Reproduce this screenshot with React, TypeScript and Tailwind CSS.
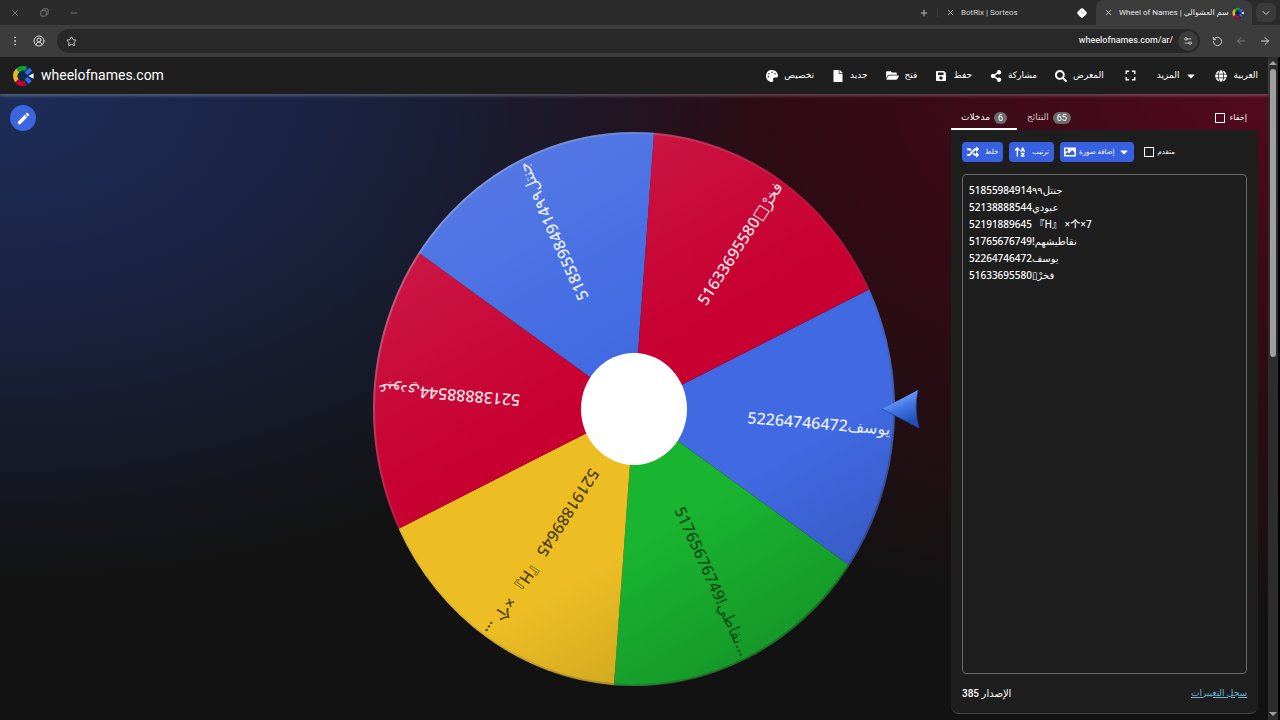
import React, { useState } from "react";
import {
  FaPalette,
  FaFile,
  FaFolderOpen,
  FaShareAlt,
  FaSearch,
  FaCaretDown,
  FaGlobe,
  FaRandom,
  FaImage,
} from "react-icons/fa";
import { FaArrowUpAZ } from "react-icons/fa6";
import { MdFullscreen, MdEdit } from "react-icons/md";
import {
  X,
  Minus,
  Plus,
  ChevronDown,
  EllipsisVertical,
  CircleUserRound,
  Star,
  Settings2,
  RotateCcw,
  ArrowLeft,
  ArrowRight,
} from "lucide-react";

interface Slice {
  label: string;
  fill: string;
  text: string;
}

const RX = 261;
const RY = 277;
const START = -25.6;

const slices: Slice[] = [
  { label: "52264746472يوسف", fill: "#4069e2", text: "#e8eefc" },
  { label: "51765676749!نقاطي…", fill: "#19b430", text: "#0a4a14" },
  { label: "52191889645 『H』 ×个 …", fill: "#ecbe24", text: "#4d3d08" },
  { label: "52138888544عبودي", fill: "#c70031", text: "#fbe3e8" },
  { label: "51855984914جنتل٩٩", fill: "#4069e2", text: "#e8eefc" },
  { label: "51633695580□فخرْ", fill: "#c70031", text: "#fbe3e8" },
];

const entries = [
  "51855984914جنتل٩٩",
  "52138888544عبودي",
  "52191889645 『H』 ×个×7",
  "51765676749!نقاطيشهم",
  "52264746472يوسف",
  "51633695580▯فخرْ",
].join("\n");

const point = (deg: number, scale = 1) => {
  const rad = (deg * Math.PI) / 180;
  return { x: Math.cos(rad) * RX * scale, y: Math.sin(rad) * RY * scale };
};

const Logo = ({ className }: { className: string }) => (
  <svg viewBox="0 0 24 24" className={className} aria-hidden="true">
    <circle cx="12" cy="12" r="11.5" fill="#0d2c4d" />
    <g fill="none" strokeWidth="5">
      <path d="M6.2 6A8.4 8.4 0 0 1 15.4 4.3" stroke="#14a02c" />
      <path d="M5.4 17.2A8.4 8.4 0 0 1 6.2 6" stroke="#eab71d" />
      <path d="M14.8 19.9A8.4 8.4 0 0 1 5.4 17.2" stroke="#c70031" />
      <path d="M15.4 9.5L20.5 4.5" stroke="#3369e8" strokeWidth="4.4" />
      <path d="M15.4 14.5L20 19" stroke="#3369e8" strokeWidth="4.4" />
    </g>
    <path d="M18 12l5.5-3v6z" fill="#fff" />
  </svg>
);

const RestoreIcon = () => (
  <svg viewBox="0 0 10 10" className="size-[9px]" fill="none" stroke="currentColor" aria-hidden="true">
    <rect x="1" y="3" width="6" height="6" rx="1" />
    <path d="M3 3V2a1 1 0 0 1 1-1h4a1 1 0 0 1 1 1v4a1 1 0 0 1-1 1H7" />
  </svg>
);

const SaveIcon = () => (
  <svg viewBox="0 0 24 24" className="size-3" aria-hidden="true">
    <path
      fill="currentColor"
      fillRule="evenodd"
      d="M4 2h14l4 4v14a2 2 0 0 1-2 2H4a2 2 0 0 1-2-2V4a2 2 0 0 1 2-2zM6 5v5h11V5zM12 12.500a3.500 3.500 0 1 0 0 7a3.500 3.500 0 1 0 0-7z"
    />
  </svg>
);

const Wheel = () => (
  <svg viewBox="-317 -315 634 626" className="h-full w-full" role="img" aria-label="wheelofnames.com">
    <defs>
      <linearGradient id="shine" x1="0.2" y1="0" x2="0.75" y2="1">
        <stop offset="0" stopColor="#fff" stopOpacity="0.12" />
        <stop offset="0.45" stopColor="#fff" stopOpacity="0" />
        <stop offset="0.7" stopColor="#000" stopOpacity="0" />
        <stop offset="1" stopColor="#000" stopOpacity="0.18" />
      </linearGradient>
      <linearGradient id="rim" x1="0" y1="0" x2="1" y2="1">
        <stop offset="0.1" stopColor="#b9c0dc" stopOpacity="0.5" />
        <stop offset="0.45" stopColor="#888" stopOpacity="0.1" />
        <stop offset="1" stopColor="#000" stopOpacity="0.5" />
      </linearGradient>
      <linearGradient id="arrow" x1="0" y1="0" x2="0.4" y2="1">
        <stop offset="0.2" stopColor="#7eabfb" />
        <stop offset="0.6" stopColor="#3f74e4" />
        <stop offset="1" stopColor="#2350b8" />
      </linearGradient>
    </defs>
    {slices.map((s, i) => {
      const a = point(START + i * 60);
      const b = point(START + (i + 1) * 60);
      return <path key={s.label} d={`M0 0L${a.x} ${a.y}A${RX} ${RY} 0 0 1 ${b.x} ${b.y}Z`} fill={s.fill} />;
    })}
    <ellipse rx={RX} ry={RY} fill="url(#shine)" />
    <ellipse rx={RX - 1} ry={RY - 1} fill="none" stroke="url(#rim)" strokeWidth="2" />
    {slices.map((s, i) => {
      const end = point(START + 30 + i * 60, 0.985);
      const angle = (Math.atan2(end.y, end.x) * 180) / Math.PI;
      return (
        <text
          key={s.label}
          transform={`rotate(${angle})`}
          x={Math.hypot(end.x, end.y)}
          y="5"
          textAnchor="end"
          fill={s.text}
          className="font-['Noto_Sans','DejaVu_Sans','Noto_Sans_CJK_SC',sans-serif] text-[16px] font-medium"
        >
          {s.label}
        </text>
      );
    })}
    <ellipse rx="53" ry="56" fill="#fff" />
    <path d="M248 0L284 -19Q280 0 285 19Z" fill="url(#arrow)" />
    <path d="M284 -19Q280 0 285 19L248 0" fill="none" stroke="#1c3f94" strokeOpacity="0.7" />
  </svg>
);

const navItems = [
  { icon: <FaPalette size={12} />, label: "تخصيص" },
  { icon: <FaFile size={12} />, label: "جديد" },
  { icon: <FaFolderOpen size={13} />, label: "فتح" },
  { icon: <SaveIcon />, label: "حفظ" },
  { icon: <FaShareAlt size={12} />, label: "مشاركة" },
  { icon: <FaSearch size={12} />, label: "المعرض" },
];

const BrowserBar = () => (
  <div className="bg-[#2b2b2b] font-['Roboto','DejaVu_Sans',sans-serif] text-[#d5d5d5]">
    <div className="flex h-[25px] items-stretch justify-between pr-1">
      <div className="flex items-center gap-5 pl-[10px] text-[#858585]">
        <button aria-label="Close"><X size={10} /></button>
        <button aria-label="Restore"><RestoreIcon /></button>
        <button aria-label="Minimize"><Minus size={10} /></button>
      </div>
      <div className="flex items-stretch text-[8px]">
        <button aria-label="New tab" className="px-2"><Plus size={10} /></button>
        <div className="my-2 w-px bg-[#3c3c3c]" />
        <div className="flex w-[158px] items-center px-2">
          <X size={9} />
          <span className="ml-[6px] flex-1 truncate">BotRix | Sorteos</span>
          <svg viewBox="0 0 12 12" className="size-3 text-white" aria-hidden="true">
            <path d="M4.500 2L6 1l1.500 1L10 4.500 11 6l-1 1.500L7.500 10 6 11l-1.500-1L2 7.500 1 6l1-1.500z" fill="currentColor" />
            <path d="M5 5h.8M7 6h.8" stroke="#555" strokeWidth="0.8" />
          </svg>
        </div>
        <div className="flex w-[156px] items-center rounded-t-lg bg-[#3c3c3c] px-2 text-[#e8e8e8]">
          <X size={9} />
          <span className="ml-[6px] flex-1 whitespace-nowrap">Wheel of Names | سم العشوالي</span>
          <Logo className="size-3" />
        </div>
        <button aria-label="Search tabs" className="my-[3px] ml-1 rounded-md bg-[#3a3a3a] px-1"><ChevronDown size={12} /></button>
      </div>
    </div>
    <div className="flex h-8 items-center gap-3 bg-[#3c3c3c] px-[9px]">
      <button aria-label="Menu"><EllipsisVertical size={12} /></button>
      <button aria-label="Profile"><CircleUserRound size={12} /></button>
      <div className="flex h-6 flex-1 items-center rounded-full bg-[#282828] pl-[9px] pr-[2px]">
        <button aria-label="Bookmark"><Star size={11} /></button>
        <input
          aria-label="Address"
          defaultValue="wheelofnames.com/ar/"
          className="min-w-0 flex-1 bg-transparent px-[5px] text-right text-[9px] font-medium text-[#e3e3e3] outline-none"
        />
        <button aria-label="Site settings" className="flex size-5 items-center justify-center rounded-full bg-[#3c3c3c]"><Settings2 size={10} /></button>
      </div>
      <button aria-label="Reload"><RotateCcw size={11} /></button>
      <button aria-label="Forward" className="text-[#7d7d7d]"><ArrowLeft size={12} /></button>
      <button aria-label="Back"><ArrowRight size={12} /></button>
    </div>
  </div>
);

const Header = () => (
  <header className="relative flex h-[37px] items-center justify-between bg-[#1e1e1e] pl-3 pr-[10px] text-white shadow-[0_2px_3px_rgba(255,255,255,0.25)]">
    <a href="#" className="flex items-center gap-[7px] font-['Roboto',sans-serif] text-[14px]">
      <Logo className="size-[22px]" />
      wheelofnames.com
    </a>
    <nav className="flex items-center gap-[18px] text-[9px] font-medium">
      {navItems.map(({ icon, label }) => (
        <button key={label} className="flex items-center gap-[6px]">
          {icon}
          {label}
        </button>
      ))}
      <button aria-label="ملء الشاشة"><MdFullscreen size={17} /></button>
      <button className="flex items-center gap-[6px]">
        المزيد
        <FaCaretDown size={12} />
      </button>
      <button className="flex items-center gap-[6px]">
        <FaGlobe size={12} />
        العربية
      </button>
    </nav>
  </header>
);

const App: React.FC = () => {
  const [names, setNames] = useState(entries);

  return (
    <div className="flex min-h-screen flex-col bg-[#121212] font-['Roboto','DejaVu_Sans',sans-serif]">
      <BrowserBar />
      <div className="flex flex-1">
        <div className="flex min-w-0 flex-1 flex-col">
          <Header />
          <main className="grid flex-1 grid-cols-[1fr_2fr_1fr] bg-[radial-gradient(ellipse_60%_78%_at_0_0,#1c2d58,#1a2240_45%,transparent),radial-gradient(ellipse_75%_85%_at_100%_0,#520a1e,#360a14_40%,transparent)]">
            <div className="pl-[10px] pt-[11px]">
              <button aria-label="تعديل" className="flex size-[26px] items-center justify-center rounded-full bg-[#3b66e0] text-white">
                <MdEdit size={15} />
              </button>
            </div>
            <div className="min-w-0">
              <Wheel />
            </div>
            <aside className="flex flex-col pb-[6px] pr-[10px] pt-[10px] text-white">
              <div className="flex h-[26px] items-stretch justify-between pr-[11px] text-[9px]">
                <div className="flex">
                  <button className="flex items-center gap-1 border-b-2 border-white px-[10px] pt-1">
                    مدخلات
                    <span className="rounded-full bg-[#6b6b6b] px-1 leading-[12px]">6</span>
                  </button>
                  <button className="flex items-center gap-1 border-b-2 border-transparent px-[10px] pt-1 text-[#d8c8cc]">
                    النتائج
                    <span className="rounded-full bg-[#6b6b6b] px-1 leading-[12px] text-white">65</span>
                  </button>
                </div>
                <label className="flex items-center gap-[5px] pt-[2px] text-[8px]">
                  <input type="checkbox" className="size-[10px] appearance-none border border-white" />
                  إخفاء
                </label>
              </div>
              <div className="flex flex-1 flex-col rounded-b-lg border-b border-[#444] bg-[#1e1e1e] px-[11px] pt-[12px]">
                <div className="flex h-5 items-stretch gap-[6px] text-[7px]">
                  <button className="flex items-center gap-[6px] rounded bg-[#3761e0] px-[5px]">
                    <FaRandom size={12} />
                    خلط
                  </button>
                  <button className="flex items-center gap-[6px] rounded bg-[#3761e0] px-[5px]">
                    <FaArrowUpAZ size={12} />
                    ترتيب
                  </button>
                  <button className="flex items-center gap-[3px] rounded bg-[#3761e0] px-1">
                    <FaImage size={12} />
                    إضافة صورة
                    <FaCaretDown size={12} />
                  </button>
                  <label className="ml-1 flex items-center gap-1">
                    <input type="checkbox" className="size-[10px] appearance-none border border-white" />
                    متقدم
                  </label>
                </div>
                <textarea
                  aria-label="مدخلات"
                  dir="ltr"
                  value={names}
                  onChange={(e) => setNames(e.target.value)}
                  className="mt-3 flex-1 resize-none rounded-sm border border-[#6a6a6a] bg-transparent px-[6px] py-[7px] font-['Noto_Sans','DejaVu_Sans','Noto_Sans_CJK_SC',sans-serif] text-[10px] leading-[17px] font-medium outline-none"
                />
                <div className="flex h-[39px] items-center justify-between text-[10px]">
                  <span dir="rtl" className="font-medium">الإصدار 385</span>
                  <a href="#" className="text-[9px] text-[#6cb2d8] underline">سجل التغييرات</a>
                </div>
              </div>
            </aside>
          </main>
        </div>
        <div className="flex w-[12px] flex-col items-center border-r-2 border-black bg-[#2c2c2c] py-1">
          <div className="border-x-4 border-b-4 border-x-transparent border-b-[#9f9f9f]" />
          <div className="mt-1 h-[288px] w-[6px] rounded-full bg-[#9f9f9f]" />
          <div className="mt-auto border-x-4 border-t-4 border-x-transparent border-t-[#9f9f9f]" />
        </div>
      </div>
    </div>
  );
};

export default App;
